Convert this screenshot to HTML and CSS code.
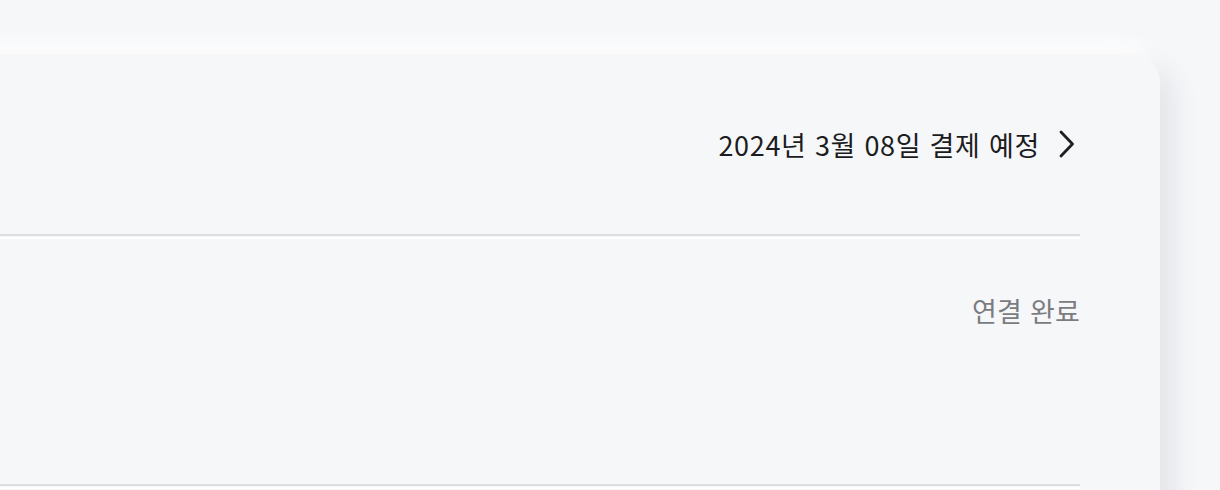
FILE: index.html
```html
<!DOCTYPE html>
<html lang="ko">
<head>
<meta charset="utf-8">
<link rel="stylesheet" href="styles.css">
</head>
<body>
<div class="page">
  <section class="card">
    <div class="row row-billing">
      <a class="billing-link" href="#">
        <span class="billing-text">2024년 3월 08일 결제 예정</span>
        <svg class="chevron" width="18" height="28" viewBox="0 0 18 28" aria-hidden="true">
          <path d="M3 2 L14.5 14 L3 26" fill="none" stroke="#1f1f22" stroke-width="2.8" stroke-linecap="round" stroke-linejoin="round"/>
        </svg>
      </a>
    </div>
    <div class="divider"></div>
    <div class="row row-status">
      <span class="status">연결 완료</span>
    </div>
    <div class="divider"></div>
  </section>
</div>
</body>
</html>
```
FILE: styles.css
```css
html, body {
  margin: 0;
  padding: 0;
  background: #f6f7f9;
  overflow: hidden;
}
body {
  font-family: "Noto Sans CJK KR", "Noto Sans", sans-serif;
  width: 1220px;
  height: 490px;
}
.page {
  padding-top: 54px;
  height: 490px;
  box-sizing: border-box;
  overflow: hidden;
}
.card {
  margin-left: -40px;
  width: 1200px;
  box-sizing: border-box;
  padding-right: 80px;
  padding-left: 40px;
  background: #f6f7f9;
  border-radius: 0 28px 0 0;
  box-shadow: 12px 14px 30px rgba(20, 24, 40, 0.09), -8px -10px 20px #ffffff;
  height: 470px;
}
.row {
  display: flex;
  justify-content: flex-end;
}
.row-billing {
  height: 180px;
  align-items: center;
}
.billing-link {
  display: flex;
  align-items: center;
  gap: 18px;
  text-decoration: none;
  color: #1c1c1f;
  margin-right: 4px;
}
.billing-text {
  font-size: 27px;
  letter-spacing: 0.7px;
  line-height: 1;
}
.chevron {
  display: block;
}
.divider {
  height: 2px;
  background: #dddee1;
  box-shadow: 0 3px 0 #ffffff;
}
.row-status {
  height: 248px;
  align-items: flex-start;
  padding-top: 61px;
  box-sizing: border-box;
}
.status {
  font-size: 27px;
  letter-spacing: 0.2px;
  color: #7b7c80;
  line-height: 1;
}
```
